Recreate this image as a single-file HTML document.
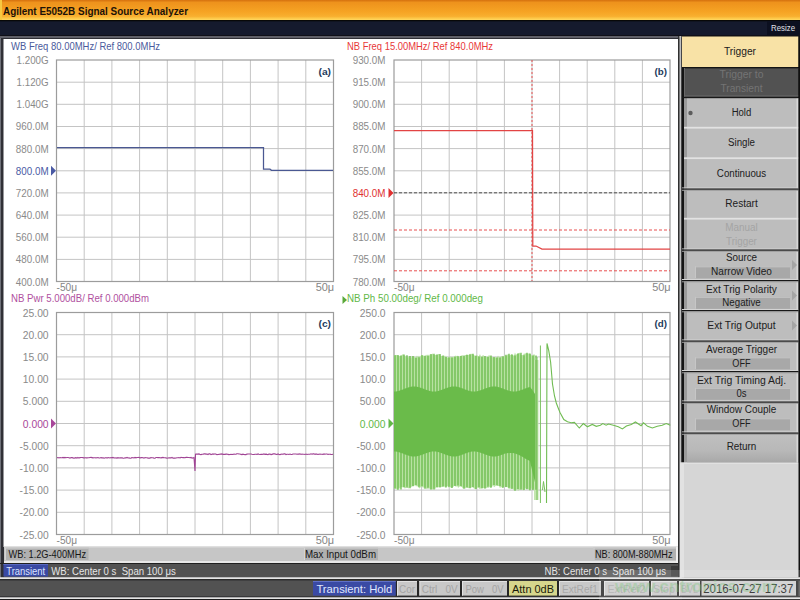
<!DOCTYPE html>
<html><head><meta charset="utf-8"><style>
html,body{margin:0;padding:0;width:800px;height:600px;overflow:hidden;background:#000}
svg{display:block}
text{font-family:"Liberation Sans", sans-serif;}
</style></head><body>
<svg width="800" height="600" viewBox="0 0 800 600" shape-rendering="auto">
<defs>
<linearGradient id="tb" x1="0" y1="0" x2="0" y2="1">
<stop offset="0" stop-color="#d4700e"/><stop offset="0.12" stop-color="#ee921c"/>
<stop offset="0.6" stop-color="#f6a424"/><stop offset="0.82" stop-color="#f8b030"/><stop offset="0.9" stop-color="#fcc444"/><stop offset="1" stop-color="#ffd860"/>
</linearGradient>
<linearGradient id="sk" x1="0" y1="0" x2="0" y2="1">
<stop offset="0" stop-color="#c0c0c0"/><stop offset="0.6" stop-color="#b8b8b8"/><stop offset="1" stop-color="#a8a8a8"/>
</linearGradient>
</defs>
<rect x="0" y="0" width="800" height="20" fill="url(#tb)"/>
<rect x="0" y="0" width="2" height="20" fill="#f8c840"/>
<text x="3" y="15" font-size="11.5" fill="#1c1208" text-anchor="start" font-weight="bold" textLength="185" lengthAdjust="spacingAndGlyphs">Agilent E5052B Signal Source Analyzer</text>
<rect x="0" y="20" width="800" height="18" fill="#151a2d"/>
<rect x="0" y="20" width="800" height="1.3" fill="#080808"/>
<rect x="0" y="35" width="800" height="1" fill="#101018"/>
<rect x="767" y="21" width="33" height="14" fill="#0c1020"/>
<text x="771" y="31" font-size="9.5" fill="#e0e0e8" text-anchor="start" font-weight="normal" textLength="24" lengthAdjust="spacingAndGlyphs">Resize</text>
<rect x="0" y="36" width="682" height="564" fill="#303036"/>
<rect x="0" y="36" width="682" height="2" fill="#606068"/>
<rect x="0" y="38" width="1" height="540" fill="#70727a"/>
<rect x="3.5" y="39" width="675.5" height="508" fill="#ffffff"/>
<line x1="84.2" y1="60" x2="84.2" y2="281.5" stroke="#c4c4c4" stroke-width="1"/>
<line x1="56.5" y1="82.2" x2="333.5" y2="82.2" stroke="#c4c4c4" stroke-width="1"/>
<line x1="111.9" y1="60" x2="111.9" y2="281.5" stroke="#c4c4c4" stroke-width="1"/>
<line x1="56.5" y1="104.3" x2="333.5" y2="104.3" stroke="#c4c4c4" stroke-width="1"/>
<line x1="139.6" y1="60" x2="139.6" y2="281.5" stroke="#c4c4c4" stroke-width="1"/>
<line x1="56.5" y1="126.5" x2="333.5" y2="126.5" stroke="#c4c4c4" stroke-width="1"/>
<line x1="167.3" y1="60" x2="167.3" y2="281.5" stroke="#c4c4c4" stroke-width="1"/>
<line x1="56.5" y1="148.6" x2="333.5" y2="148.6" stroke="#c4c4c4" stroke-width="1"/>
<line x1="195.0" y1="60" x2="195.0" y2="281.5" stroke="#c4c4c4" stroke-width="1"/>
<line x1="56.5" y1="170.8" x2="333.5" y2="170.8" stroke="#c4c4c4" stroke-width="1"/>
<line x1="222.7" y1="60" x2="222.7" y2="281.5" stroke="#c4c4c4" stroke-width="1"/>
<line x1="56.5" y1="192.9" x2="333.5" y2="192.9" stroke="#c4c4c4" stroke-width="1"/>
<line x1="250.4" y1="60" x2="250.4" y2="281.5" stroke="#c4c4c4" stroke-width="1"/>
<line x1="56.5" y1="215.1" x2="333.5" y2="215.1" stroke="#c4c4c4" stroke-width="1"/>
<line x1="278.1" y1="60" x2="278.1" y2="281.5" stroke="#c4c4c4" stroke-width="1"/>
<line x1="56.5" y1="237.2" x2="333.5" y2="237.2" stroke="#c4c4c4" stroke-width="1"/>
<line x1="305.8" y1="60" x2="305.8" y2="281.5" stroke="#c4c4c4" stroke-width="1"/>
<line x1="56.5" y1="259.4" x2="333.5" y2="259.4" stroke="#c4c4c4" stroke-width="1"/>
<rect x="56.5" y="60" width="277.0" height="221.5" fill="none" stroke="#9c9c9c" stroke-width="1.2"/>
<text x="48.6" y="64.0" font-size="11" fill="#8a8a8a" text-anchor="end" font-weight="normal" textLength="32.0" lengthAdjust="spacingAndGlyphs">1.200G</text>
<text x="48.6" y="86.15" font-size="11" fill="#8a8a8a" text-anchor="end" font-weight="normal" textLength="32.0" lengthAdjust="spacingAndGlyphs">1.120G</text>
<text x="48.6" y="108.3" font-size="11" fill="#8a8a8a" text-anchor="end" font-weight="normal" textLength="32.0" lengthAdjust="spacingAndGlyphs">1.040G</text>
<text x="48.6" y="130.45" font-size="11" fill="#8a8a8a" text-anchor="end" font-weight="normal" textLength="32.8" lengthAdjust="spacingAndGlyphs">960.0M</text>
<text x="48.6" y="152.6" font-size="11" fill="#8a8a8a" text-anchor="end" font-weight="normal" textLength="32.8" lengthAdjust="spacingAndGlyphs">880.0M</text>
<text x="48.6" y="174.75" font-size="11" fill="#4a5aa4" text-anchor="end" font-weight="normal" textLength="32.8" lengthAdjust="spacingAndGlyphs">800.0M</text>
<text x="48.6" y="196.9" font-size="11" fill="#8a8a8a" text-anchor="end" font-weight="normal" textLength="32.8" lengthAdjust="spacingAndGlyphs">720.0M</text>
<text x="48.6" y="219.05" font-size="11" fill="#8a8a8a" text-anchor="end" font-weight="normal" textLength="32.8" lengthAdjust="spacingAndGlyphs">640.0M</text>
<text x="48.6" y="241.2" font-size="11" fill="#8a8a8a" text-anchor="end" font-weight="normal" textLength="32.8" lengthAdjust="spacingAndGlyphs">560.0M</text>
<text x="48.6" y="263.35" font-size="11" fill="#8a8a8a" text-anchor="end" font-weight="normal" textLength="32.8" lengthAdjust="spacingAndGlyphs">480.0M</text>
<text x="48.6" y="285.5" font-size="11" fill="#8a8a8a" text-anchor="end" font-weight="normal" textLength="32.8" lengthAdjust="spacingAndGlyphs">400.0M</text>
<path d="M51.0,165.75 L56.0,170.75 L51.0,175.75 Z" fill="#4a5aa4"/>
<text x="56.5" y="290.5" font-size="10.5" fill="#858585" text-anchor="start" font-weight="normal" textLength="20.5" lengthAdjust="spacingAndGlyphs">-50μ</text>
<text x="334.2" y="290.5" font-size="10.5" fill="#858585" text-anchor="end" font-weight="normal" textLength="18.5" lengthAdjust="spacingAndGlyphs">50μ</text>
<line x1="421.6" y1="60" x2="421.6" y2="281.5" stroke="#c4c4c4" stroke-width="1"/>
<line x1="394" y1="82.2" x2="670" y2="82.2" stroke="#c4c4c4" stroke-width="1"/>
<line x1="449.2" y1="60" x2="449.2" y2="281.5" stroke="#c4c4c4" stroke-width="1"/>
<line x1="394" y1="104.3" x2="670" y2="104.3" stroke="#c4c4c4" stroke-width="1"/>
<line x1="476.8" y1="60" x2="476.8" y2="281.5" stroke="#c4c4c4" stroke-width="1"/>
<line x1="394" y1="126.5" x2="670" y2="126.5" stroke="#c4c4c4" stroke-width="1"/>
<line x1="504.4" y1="60" x2="504.4" y2="281.5" stroke="#c4c4c4" stroke-width="1"/>
<line x1="394" y1="148.6" x2="670" y2="148.6" stroke="#c4c4c4" stroke-width="1"/>
<line x1="532.0" y1="60" x2="532.0" y2="281.5" stroke="#c4c4c4" stroke-width="1"/>
<line x1="394" y1="170.8" x2="670" y2="170.8" stroke="#c4c4c4" stroke-width="1"/>
<line x1="559.6" y1="60" x2="559.6" y2="281.5" stroke="#c4c4c4" stroke-width="1"/>
<line x1="394" y1="192.9" x2="670" y2="192.9" stroke="#c4c4c4" stroke-width="1"/>
<line x1="587.2" y1="60" x2="587.2" y2="281.5" stroke="#c4c4c4" stroke-width="1"/>
<line x1="394" y1="215.1" x2="670" y2="215.1" stroke="#c4c4c4" stroke-width="1"/>
<line x1="614.8" y1="60" x2="614.8" y2="281.5" stroke="#c4c4c4" stroke-width="1"/>
<line x1="394" y1="237.2" x2="670" y2="237.2" stroke="#c4c4c4" stroke-width="1"/>
<line x1="642.4" y1="60" x2="642.4" y2="281.5" stroke="#c4c4c4" stroke-width="1"/>
<line x1="394" y1="259.4" x2="670" y2="259.4" stroke="#c4c4c4" stroke-width="1"/>
<rect x="394" y="60" width="276" height="221.5" fill="none" stroke="#9c9c9c" stroke-width="1.2"/>
<text x="385.5" y="64.0" font-size="11" fill="#8a8a8a" text-anchor="end" font-weight="normal" textLength="32.8" lengthAdjust="spacingAndGlyphs">930.0M</text>
<text x="385.5" y="86.15" font-size="11" fill="#8a8a8a" text-anchor="end" font-weight="normal" textLength="32.8" lengthAdjust="spacingAndGlyphs">915.0M</text>
<text x="385.5" y="108.3" font-size="11" fill="#8a8a8a" text-anchor="end" font-weight="normal" textLength="32.8" lengthAdjust="spacingAndGlyphs">900.0M</text>
<text x="385.5" y="130.45" font-size="11" fill="#8a8a8a" text-anchor="end" font-weight="normal" textLength="32.8" lengthAdjust="spacingAndGlyphs">885.0M</text>
<text x="385.5" y="152.6" font-size="11" fill="#8a8a8a" text-anchor="end" font-weight="normal" textLength="32.8" lengthAdjust="spacingAndGlyphs">870.0M</text>
<text x="385.5" y="174.75" font-size="11" fill="#8a8a8a" text-anchor="end" font-weight="normal" textLength="32.8" lengthAdjust="spacingAndGlyphs">855.0M</text>
<text x="385.5" y="196.9" font-size="11" fill="#e03030" text-anchor="end" font-weight="normal" textLength="32.8" lengthAdjust="spacingAndGlyphs">840.0M</text>
<text x="385.5" y="219.05" font-size="11" fill="#8a8a8a" text-anchor="end" font-weight="normal" textLength="32.8" lengthAdjust="spacingAndGlyphs">825.0M</text>
<text x="385.5" y="241.2" font-size="11" fill="#8a8a8a" text-anchor="end" font-weight="normal" textLength="32.8" lengthAdjust="spacingAndGlyphs">810.0M</text>
<text x="385.5" y="263.35" font-size="11" fill="#8a8a8a" text-anchor="end" font-weight="normal" textLength="32.8" lengthAdjust="spacingAndGlyphs">795.0M</text>
<text x="385.5" y="285.5" font-size="11" fill="#8a8a8a" text-anchor="end" font-weight="normal" textLength="32.8" lengthAdjust="spacingAndGlyphs">780.0M</text>
<path d="M388.5,187.9 L393.5,192.9 L388.5,197.9 Z" fill="#e03030"/>
<text x="394" y="290.5" font-size="10.5" fill="#858585" text-anchor="start" font-weight="normal" textLength="20.5" lengthAdjust="spacingAndGlyphs">-50μ</text>
<text x="670.7" y="290.5" font-size="10.5" fill="#858585" text-anchor="end" font-weight="normal" textLength="18.5" lengthAdjust="spacingAndGlyphs">50μ</text>
<line x1="84.2" y1="312.5" x2="84.2" y2="534.5" stroke="#c4c4c4" stroke-width="1"/>
<line x1="56.5" y1="334.7" x2="333.5" y2="334.7" stroke="#c4c4c4" stroke-width="1"/>
<line x1="111.9" y1="312.5" x2="111.9" y2="534.5" stroke="#c4c4c4" stroke-width="1"/>
<line x1="56.5" y1="356.9" x2="333.5" y2="356.9" stroke="#c4c4c4" stroke-width="1"/>
<line x1="139.6" y1="312.5" x2="139.6" y2="534.5" stroke="#c4c4c4" stroke-width="1"/>
<line x1="56.5" y1="379.1" x2="333.5" y2="379.1" stroke="#c4c4c4" stroke-width="1"/>
<line x1="167.3" y1="312.5" x2="167.3" y2="534.5" stroke="#c4c4c4" stroke-width="1"/>
<line x1="56.5" y1="401.3" x2="333.5" y2="401.3" stroke="#c4c4c4" stroke-width="1"/>
<line x1="195.0" y1="312.5" x2="195.0" y2="534.5" stroke="#c4c4c4" stroke-width="1"/>
<line x1="56.5" y1="423.5" x2="333.5" y2="423.5" stroke="#c4c4c4" stroke-width="1"/>
<line x1="222.7" y1="312.5" x2="222.7" y2="534.5" stroke="#c4c4c4" stroke-width="1"/>
<line x1="56.5" y1="445.7" x2="333.5" y2="445.7" stroke="#c4c4c4" stroke-width="1"/>
<line x1="250.4" y1="312.5" x2="250.4" y2="534.5" stroke="#c4c4c4" stroke-width="1"/>
<line x1="56.5" y1="467.9" x2="333.5" y2="467.9" stroke="#c4c4c4" stroke-width="1"/>
<line x1="278.1" y1="312.5" x2="278.1" y2="534.5" stroke="#c4c4c4" stroke-width="1"/>
<line x1="56.5" y1="490.1" x2="333.5" y2="490.1" stroke="#c4c4c4" stroke-width="1"/>
<line x1="305.8" y1="312.5" x2="305.8" y2="534.5" stroke="#c4c4c4" stroke-width="1"/>
<line x1="56.5" y1="512.3" x2="333.5" y2="512.3" stroke="#c4c4c4" stroke-width="1"/>
<rect x="56.5" y="312.5" width="277.0" height="222.0" fill="none" stroke="#9c9c9c" stroke-width="1.2"/>
<text x="48.6" y="316.5" font-size="11" fill="#8a8a8a" text-anchor="end" font-weight="normal" textLength="25.8" lengthAdjust="spacingAndGlyphs">25.00</text>
<text x="48.6" y="338.7" font-size="11" fill="#8a8a8a" text-anchor="end" font-weight="normal" textLength="25.8" lengthAdjust="spacingAndGlyphs">20.00</text>
<text x="48.6" y="360.9" font-size="11" fill="#8a8a8a" text-anchor="end" font-weight="normal" textLength="25.8" lengthAdjust="spacingAndGlyphs">15.00</text>
<text x="48.6" y="383.1" font-size="11" fill="#8a8a8a" text-anchor="end" font-weight="normal" textLength="25.8" lengthAdjust="spacingAndGlyphs">10.00</text>
<text x="48.6" y="405.3" font-size="11" fill="#8a8a8a" text-anchor="end" font-weight="normal" textLength="25.8" lengthAdjust="spacingAndGlyphs">5.000</text>
<text x="48.6" y="427.5" font-size="11" fill="#a8479a" text-anchor="end" font-weight="normal" textLength="25.8" lengthAdjust="spacingAndGlyphs">0.000</text>
<text x="48.6" y="449.7" font-size="11" fill="#8a8a8a" text-anchor="end" font-weight="normal" textLength="29.0" lengthAdjust="spacingAndGlyphs">-5.000</text>
<text x="48.6" y="471.9" font-size="11" fill="#8a8a8a" text-anchor="end" font-weight="normal" textLength="29.0" lengthAdjust="spacingAndGlyphs">-10.00</text>
<text x="48.6" y="494.1" font-size="11" fill="#8a8a8a" text-anchor="end" font-weight="normal" textLength="29.0" lengthAdjust="spacingAndGlyphs">-15.00</text>
<text x="48.6" y="516.3" font-size="11" fill="#8a8a8a" text-anchor="end" font-weight="normal" textLength="29.0" lengthAdjust="spacingAndGlyphs">-20.00</text>
<text x="48.6" y="538.5" font-size="11" fill="#8a8a8a" text-anchor="end" font-weight="normal" textLength="29.0" lengthAdjust="spacingAndGlyphs">-25.00</text>
<path d="M51.0,418.5 L56.0,423.5 L51.0,428.5 Z" fill="#a8479a"/>
<text x="56.5" y="543.5" font-size="10.5" fill="#858585" text-anchor="start" font-weight="normal" textLength="20.5" lengthAdjust="spacingAndGlyphs">-50μ</text>
<text x="334.2" y="543.5" font-size="10.5" fill="#858585" text-anchor="end" font-weight="normal" textLength="18.5" lengthAdjust="spacingAndGlyphs">50μ</text>
<line x1="421.6" y1="312.5" x2="421.6" y2="534.5" stroke="#c4c4c4" stroke-width="1"/>
<line x1="394" y1="334.7" x2="670" y2="334.7" stroke="#c4c4c4" stroke-width="1"/>
<line x1="449.2" y1="312.5" x2="449.2" y2="534.5" stroke="#c4c4c4" stroke-width="1"/>
<line x1="394" y1="356.9" x2="670" y2="356.9" stroke="#c4c4c4" stroke-width="1"/>
<line x1="476.8" y1="312.5" x2="476.8" y2="534.5" stroke="#c4c4c4" stroke-width="1"/>
<line x1="394" y1="379.1" x2="670" y2="379.1" stroke="#c4c4c4" stroke-width="1"/>
<line x1="504.4" y1="312.5" x2="504.4" y2="534.5" stroke="#c4c4c4" stroke-width="1"/>
<line x1="394" y1="401.3" x2="670" y2="401.3" stroke="#c4c4c4" stroke-width="1"/>
<line x1="532.0" y1="312.5" x2="532.0" y2="534.5" stroke="#c4c4c4" stroke-width="1"/>
<line x1="394" y1="423.5" x2="670" y2="423.5" stroke="#c4c4c4" stroke-width="1"/>
<line x1="559.6" y1="312.5" x2="559.6" y2="534.5" stroke="#c4c4c4" stroke-width="1"/>
<line x1="394" y1="445.7" x2="670" y2="445.7" stroke="#c4c4c4" stroke-width="1"/>
<line x1="587.2" y1="312.5" x2="587.2" y2="534.5" stroke="#c4c4c4" stroke-width="1"/>
<line x1="394" y1="467.9" x2="670" y2="467.9" stroke="#c4c4c4" stroke-width="1"/>
<line x1="614.8" y1="312.5" x2="614.8" y2="534.5" stroke="#c4c4c4" stroke-width="1"/>
<line x1="394" y1="490.1" x2="670" y2="490.1" stroke="#c4c4c4" stroke-width="1"/>
<line x1="642.4" y1="312.5" x2="642.4" y2="534.5" stroke="#c4c4c4" stroke-width="1"/>
<line x1="394" y1="512.3" x2="670" y2="512.3" stroke="#c4c4c4" stroke-width="1"/>
<rect x="394" y="312.5" width="276" height="222.0" fill="none" stroke="#9c9c9c" stroke-width="1.2"/>
<text x="385.5" y="316.5" font-size="11" fill="#8a8a8a" text-anchor="end" font-weight="normal" textLength="25.8" lengthAdjust="spacingAndGlyphs">250.0</text>
<text x="385.5" y="338.7" font-size="11" fill="#8a8a8a" text-anchor="end" font-weight="normal" textLength="25.8" lengthAdjust="spacingAndGlyphs">200.0</text>
<text x="385.5" y="360.9" font-size="11" fill="#8a8a8a" text-anchor="end" font-weight="normal" textLength="25.8" lengthAdjust="spacingAndGlyphs">150.0</text>
<text x="385.5" y="383.1" font-size="11" fill="#8a8a8a" text-anchor="end" font-weight="normal" textLength="25.8" lengthAdjust="spacingAndGlyphs">100.0</text>
<text x="385.5" y="405.3" font-size="11" fill="#8a8a8a" text-anchor="end" font-weight="normal" textLength="25.8" lengthAdjust="spacingAndGlyphs">50.00</text>
<text x="385.5" y="427.5" font-size="11" fill="#62b848" text-anchor="end" font-weight="normal" textLength="25.8" lengthAdjust="spacingAndGlyphs">0.000</text>
<text x="385.5" y="449.7" font-size="11" fill="#8a8a8a" text-anchor="end" font-weight="normal" textLength="29.0" lengthAdjust="spacingAndGlyphs">-50.00</text>
<text x="385.5" y="471.9" font-size="11" fill="#8a8a8a" text-anchor="end" font-weight="normal" textLength="29.0" lengthAdjust="spacingAndGlyphs">-100.0</text>
<text x="385.5" y="494.1" font-size="11" fill="#8a8a8a" text-anchor="end" font-weight="normal" textLength="29.0" lengthAdjust="spacingAndGlyphs">-150.0</text>
<text x="385.5" y="516.3" font-size="11" fill="#8a8a8a" text-anchor="end" font-weight="normal" textLength="29.0" lengthAdjust="spacingAndGlyphs">-200.0</text>
<text x="385.5" y="538.5" font-size="11" fill="#8a8a8a" text-anchor="end" font-weight="normal" textLength="29.0" lengthAdjust="spacingAndGlyphs">-250.0</text>
<path d="M388.5,418.5 L393.5,423.5 L388.5,428.5 Z" fill="#62b848"/>
<text x="394" y="543.5" font-size="10.5" fill="#858585" text-anchor="start" font-weight="normal" textLength="20.5" lengthAdjust="spacingAndGlyphs">-50μ</text>
<text x="670.7" y="543.5" font-size="10.5" fill="#858585" text-anchor="end" font-weight="normal" textLength="18.5" lengthAdjust="spacingAndGlyphs">50μ</text>
<text x="11" y="50" font-size="11" fill="#4a5a9c" text-anchor="start" font-weight="normal" textLength="149" lengthAdjust="spacingAndGlyphs">WB Freq 80.00MHz/ Ref 800.0MHz</text>
<text x="347" y="50" font-size="11" fill="#e83838" text-anchor="start" font-weight="normal" textLength="146" lengthAdjust="spacingAndGlyphs">NB Freq 15.00MHz/ Ref 840.0MHz</text>
<text x="11" y="302" font-size="11" fill="#b050a0" text-anchor="start" font-weight="normal" textLength="138" lengthAdjust="spacingAndGlyphs">NB Pwr 5.000dB/ Ref 0.000dBm</text>
<path d="M342.5,296 L347,300 L342.5,304 Z" fill="#5aa83a"/>
<text x="347" y="302" font-size="11" fill="#62b848" text-anchor="start" font-weight="normal" textLength="136" lengthAdjust="spacingAndGlyphs">NB Ph 50.00deg/ Ref 0.000deg</text>
<text x="331" y="74.5" font-size="9.5" fill="#1c3a5c" text-anchor="end" font-weight="bold" textLength="12.5" lengthAdjust="spacingAndGlyphs">(a)</text>
<text x="667" y="74.5" font-size="9.5" fill="#1c3a5c" text-anchor="end" font-weight="bold" textLength="12.5" lengthAdjust="spacingAndGlyphs">(b)</text>
<text x="331" y="326.5" font-size="9.5" fill="#1c3a5c" text-anchor="end" font-weight="bold" textLength="12.5" lengthAdjust="spacingAndGlyphs">(c)</text>
<text x="667" y="326.5" font-size="9.5" fill="#1c3a5c" text-anchor="end" font-weight="bold" textLength="12.5" lengthAdjust="spacingAndGlyphs">(d)</text>
<polyline points="57,147.5 263.5,147.5 263.5,169.2 270,169.2 271.5,170.3 333,170.3" fill="none" stroke="#4a5892" stroke-width="1.25"/>
<line x1="532" y1="60" x2="532" y2="281" stroke="#e85050" stroke-width="1" stroke-dasharray="2,2"/>
<line x1="394" y1="192.8" x2="670" y2="192.8" stroke="#505050" stroke-width="1" stroke-dasharray="3,2"/>
<line x1="394" y1="230" x2="670" y2="230" stroke="#e85050" stroke-width="1" stroke-dasharray="3,2"/>
<line x1="394" y1="270.8" x2="670" y2="270.8" stroke="#e85050" stroke-width="1" stroke-dasharray="3,2"/>
<polyline points="394,130.7 532.5,130.7 532.8,246 536,246 542,249 670,249" fill="none" stroke="#e24444" stroke-width="1.25"/>
<polyline points="57,457.7 58,457.5 59,457.9 60,457.5 61,457.8 62,457.7 63,457.4 64,457.8 65,457.4 66,457.7 67,457.5 68,457.5 69,457.7 70,458.1 71,457.5 72,457.6 73,457.9 74,458.2 75,457.9 76,457.7 77,458.2 78,457.4 79,458.1 80,457.6 81,457.5 82,457.5 83,457.6 84,458.1 85,457.5 86,457.9 87,457.9 88,457.7 89,457.8 90,457.5 91,457.4 92,457.6 93,457.9 94,457.7 95,457.7 96,457.9 97,457.8 98,457.6 99,458.0 100,458.0 101,457.6 102,457.9 103,457.8 104,458.1 105,458.0 106,457.6 107,458.2 108,457.5 109,457.7 110,458.0 111,457.5 112,457.8 113,457.4 114,457.9 115,458.0 116,457.9 117,458.1 118,457.7 119,458.0 120,457.9 121,457.9 122,457.8 123,458.1 124,458.2 125,457.8 126,457.9 127,457.4 128,458.0 129,457.9 130,458.2 131,458.1 132,457.6 133,457.7 134,457.9 135,457.4 136,457.8 137,457.5 138,457.5 139,457.4 140,458.0 141,457.5 142,457.6 143,457.7 144,458.1 145,457.5 146,457.8 147,457.8 148,458.1 149,458.1 150,458.1 151,457.6 152,457.7 153,457.7 154,458.1 155,458.2 156,457.5 157,457.5 158,457.6 159,457.6 160,457.8 161,457.9 162,457.6 163,457.4 164,457.7 165,457.7 166,457.9 167,458.2 168,458.0 169,457.8 170,457.9 171,457.9 172,457.4 173,458.1 174,458.0 175,458.1 176,458.0 177,457.7 178,457.7 179,457.5 180,457.9 181,457.4 182,457.5 183,457.6 184,457.5 185,457.7 186,457.4 187,457.4 188,457.5 189,457.5 190,457.7 191,457.4 192,458.1 193,457.9 194,457.5 195,471 195.5,454.2 196,454.0 197,454.1 198,454.1 199,453.9 200,454.5 201,454.6 202,454.2 203,454.2 204,453.9 205,453.9 206,454.1 207,454.0 208,454.5 209,453.9 210,453.8 211,454.6 212,454.2 213,453.9 214,454.2 215,453.8 216,454.2 217,454.6 218,454.5 219,454.4 220,454.0 221,454.1 222,453.9 223,454.4 224,454.2 225,454.4 226,454.1 227,454.0 228,454.4 229,454.6 230,454.5 231,454.4 232,454.5 233,454.4 234,454.0 235,454.2 236,454.1 237,453.8 238,453.8 239,454.0 240,454.0 241,454.4 242,454.6 243,454.2 244,454.5 245,454.6 246,454.6 247,454.1 248,454.0 249,454.0 250,454.0 251,454.0 252,454.3 253,454.5 254,454.5 255,454.2 256,454.3 257,454.4 258,453.9 259,454.3 260,454.5 261,454.4 262,454.4 263,454.2 264,453.9 265,454.4 266,454.1 267,454.4 268,454.6 269,454.1 270,454.1 271,454.6 272,454.4 273,453.9 274,453.9 275,453.9 276,454.5 277,454.4 278,453.9 279,454.5 280,454.6 281,454.3 282,454.1 283,454.2 284,453.9 285,453.8 286,454.6 287,454.3 288,454.2 289,454.5 290,454.1 291,454.5 292,454.5 293,454.0 294,454.0 295,454.0 296,454.0 297,454.3 298,454.0 299,454.1 300,453.9 301,454.5 302,454.1 303,454.2 304,454.3 305,454.5 306,454.1 307,454.5 308,454.2 309,454.2 310,454.2 311,453.8 312,454.2 313,453.9 314,453.8 315,454.4 316,453.9 317,454.2 318,454.4 319,454.2 320,454.1 321,454.2 322,454.2 323,454.4 324,453.9 325,454.2 326,454.0 327,454.0 328,454.4 329,454.2 330,454.2 331,454.4 332,454.5 333,454.2" fill="none" stroke="#a04494" stroke-width="1.1"/>
<path d="M394,355.3 L395,355.0 L396,354.9 L397,355.0 L398,355.8 L399,356.6 L400,355.6 L401,356.6 L402,354.6 L403,354.6 L404,354.7 L405,357.0 L406,355.3 L407,356.9 L408,357.7 L409,355.9 L410,356.5 L411,358.4 L412,355.9 L413,357.0 L414,356.1 L415,357.7 L416,357.1 L417,355.4 L418,357.2 L419,355.4 L420,357.5 L421,355.3 L422,354.9 L423,355.5 L424,355.8 L425,356.8 L426,354.6 L427,355.8 L428,354.2 L429,355.9 L430,353.9 L431,355.5 L432,353.8 L433,353.7 L434,354.9 L435,355.2 L436,354.4 L437,355.2 L438,354.0 L439,353.9 L440,354.8 L441,356.3 L442,355.7 L443,355.4 L444,355.3 L445,356.9 L446,355.4 L447,357.8 L448,357.5 L449,356.7 L450,356.5 L451,357.5 L452,356.5 L453,357.6 L454,356.7 L455,355.7 L456,355.7 L457,356.2 L458,355.6 L459,357.8 L460,355.9 L461,355.8 L462,355.3 L463,355.4 L464,357.4 L465,355.1 L466,355.1 L467,354.0 L468,355.3 L469,354.4 L470,353.7 L471,353.9 L472,353.7 L473,354.4 L474,355.3 L475,355.8 L476,355.7 L477,354.8 L478,356.6 L479,356.0 L480,354.0 L481,356.7 L482,356.4 L483,354.8 L484,356.0 L485,357.1 L486,356.6 L487,357.0 L488,355.8 L489,355.6 L490,355.6 L491,357.1 L492,357.3 L493,357.0 L494,357.9 L495,357.0 L496,357.4 L497,357.6 L498,355.5 L499,357.4 L500,357.3 L501,356.4 L502,356.2 L503,357.0 L504,356.4 L505,354.8 L506,356.3 L507,355.5 L508,353.8 L509,355.4 L510,355.2 L511,354.6 L512,354.2 L513,355.4 L514,355.5 L515,352.6 L516,354.9 L517,353.8 L518,353.0 L519,353.0 L520,352.8 L521,355.3 L522,355.0 L523,355.2 L524,353.3 L525,354.1 L526,352.7 L527,354.1 L528,353.2 L529,353.8 L530,352.8 L531,355.3 L532,355.5 L533,355.4 L534,353.7 L535,355.5 L535,489.8 L534,489.1 L533,488.7 L532,489.9 L531,488.1 L530,489.9 L529,490.2 L528,488.7 L527,488.7 L526,489.3 L525,487.9 L524,490.6 L523,490.1 L522,489.5 L521,488.5 L520,489.7 L519,489.9 L518,490.9 L517,488.9 L516,491.0 L515,489.4 L514,490.7 L513,488.4 L512,488.0 L511,488.9 L510,488.2 L509,489.2 L508,487.7 L507,486.7 L506,487.3 L505,486.9 L504,486.2 L503,487.7 L502,487.7 L501,486.7 L500,488.3 L499,485.9 L498,486.0 L497,485.9 L496,485.2 L495,486.6 L494,487.2 L493,485.0 L492,487.1 L491,487.0 L490,487.7 L489,486.4 L488,485.5 L487,487.6 L486,488.4 L485,488.3 L484,488.5 L483,487.7 L482,488.7 L481,488.3 L480,489.1 L479,488.6 L478,487.3 L477,487.9 L476,489.6 L475,489.0 L474,488.6 L473,487.7 L472,487.0 L471,488.1 L470,487.6 L469,488.2 L468,488.1 L467,487.6 L466,487.4 L465,489.1 L464,487.6 L463,488.7 L462,487.0 L461,486.9 L460,486.1 L459,487.3 L458,487.7 L457,485.6 L456,487.3 L455,485.4 L454,486.0 L453,486.9 L452,487.5 L451,488.1 L450,486.7 L449,487.8 L448,486.7 L447,485.9 L446,487.1 L445,487.5 L444,486.0 L443,486.2 L442,486.8 L441,487.3 L440,487.5 L439,487.3 L438,487.3 L437,487.6 L436,487.3 L435,489.8 L434,488.0 L433,489.6 L432,489.5 L431,489.3 L430,489.6 L429,488.0 L428,486.8 L427,488.6 L426,489.1 L425,486.9 L424,488.7 L423,486.2 L422,488.0 L421,486.3 L420,488.3 L419,488.2 L418,486.7 L417,486.1 L416,486.4 L415,485.1 L414,486.0 L413,486.0 L412,486.3 L411,487.6 L410,486.7 L409,488.2 L408,488.3 L407,486.0 L406,487.8 L405,488.5 L404,488.0 L403,486.9 L402,487.6 L401,486.9 L400,489.4 L399,487.5 L398,489.4 L397,489.7 L396,488.6 L395,489.1 L394,488.5 Z" fill="#b8e2a2"/>
<rect x="534" y="360" width="4.5" height="140" fill="#c4e6b0"/>
<path d="M395,355.3 V488.5 M398,355.0 V489.7 M401,355.6 V489.4 M404,354.6 V486.9 M407,355.3 V487.8 M410,355.9 V488.2 M413,355.9 V486.3 M416,357.7 V485.1 M419,357.2 V486.7 M422,355.3 V486.3 M425,355.8 V488.7 M428,355.8 V488.6 M431,353.9 V489.6 M434,353.7 V489.6 M437,354.4 V487.3 M440,353.9 V487.3 M443,355.7 V486.8 M446,356.9 V487.5 M449,357.5 V486.7 M452,357.5 V488.1 M455,356.7 V486.0 M458,356.2 V485.6 M461,355.9 V486.1 M464,355.4 V488.7 M467,355.1 V487.4 M470,354.4 V488.2 M473,353.7 V487.0 M476,355.8 V489.0 M479,356.6 V487.3 M482,356.7 V488.3 M485,356.0 V488.5 M488,357.0 V487.6 M491,355.6 V487.7 M494,357.0 V485.0 M497,357.4 V485.2 M500,357.4 V485.9 M503,356.2 V487.7 M506,354.8 V486.9 M509,353.8 V487.7 M512,354.6 V488.9 M515,355.5 V490.7 M518,353.8 V488.9 M521,352.8 V489.7 M524,355.2 V490.1 M527,352.7 V489.3 M530,353.8 V490.2 M533,355.5 V489.9 M536,355.5 V489.8" stroke="#6abb4a" stroke-width="1.3" fill="none"/>
<path d="M394,391.5 L395,391.5 L396,391.4 L397,391.2 L398,391.0 L399,390.8 L400,390.5 L401,390.1 L402,389.8 L403,389.4 L404,389.0 L405,388.6 L406,388.2 L407,387.9 L408,387.5 L409,387.2 L410,387.0 L411,386.8 L412,386.6 L413,386.5 L414,386.5 L415,386.5 L416,386.6 L417,386.8 L418,387.0 L419,387.2 L420,387.5 L421,387.9 L422,388.2 L423,388.6 L424,389.0 L425,389.4 L426,389.8 L427,390.1 L428,390.5 L429,390.8 L430,391.0 L431,391.2 L432,391.4 L433,391.5 L434,391.5 L435,391.5 L436,391.4 L437,391.2 L438,391.0 L439,390.8 L440,390.5 L441,390.1 L442,389.8 L443,389.4 L444,389.0 L445,388.6 L446,388.2 L447,387.9 L448,387.5 L449,387.2 L450,387.0 L451,386.8 L452,386.6 L453,386.5 L454,386.5 L455,386.5 L456,386.6 L457,386.8 L458,387.0 L459,387.2 L460,387.5 L461,387.9 L462,388.2 L463,388.6 L464,389.0 L465,389.4 L466,389.8 L467,390.1 L468,390.5 L469,390.8 L470,391.0 L471,391.2 L472,391.4 L473,391.5 L474,391.5 L475,391.5 L476,391.4 L477,391.2 L478,391.0 L479,390.8 L480,390.5 L481,390.1 L482,389.8 L483,389.4 L484,389.0 L485,388.6 L486,388.2 L487,387.9 L488,387.5 L489,387.2 L490,387.0 L491,386.8 L492,386.6 L493,386.5 L494,386.5 L495,386.5 L496,386.6 L497,386.8 L498,387.0 L499,387.2 L500,387.5 L501,387.9 L502,388.2 L503,388.6 L504,389.0 L505,389.4 L506,389.8 L507,390.1 L508,390.5 L509,390.8 L510,391.0 L511,391.2 L512,391.4 L513,391.5 L514,391.5 L515,391.5 L516,391.4 L517,391.2 L518,391.0 L519,390.8 L520,390.5 L521,390.1 L522,389.8 L523,389.4 L524,389.0 L525,388.6 L526,388.2 L527,387.9 L528,387.5 L529,387.2 L530,387.0 L531,388.3 L532,389.6 L533,391.0 L534,392.5 L535,394.0 L535,482.5 L534,478.3 L533,474.1 L532,469.8 L531,465.4 L530,461.0 L529,460.6 L528,460.1 L527,459.5 L526,459.0 L525,458.4 L524,457.8 L523,457.2 L522,456.6 L521,456.1 L520,455.5 L519,455.0 L518,454.6 L517,454.2 L516,453.8 L515,453.5 L514,453.3 L513,453.1 L512,453.0 L511,453.0 L510,453.0 L509,453.0 L508,453.1 L507,453.3 L506,453.4 L505,453.6 L504,454.0 L503,454.4 L502,454.8 L501,455.1 L500,455.5 L499,455.8 L498,456.0 L497,456.2 L496,456.4 L495,456.5 L494,456.5 L493,456.5 L492,456.4 L491,456.2 L490,456.0 L489,455.8 L488,455.5 L487,455.1 L486,454.8 L485,454.4 L484,454.0 L483,453.6 L482,453.2 L481,452.9 L480,452.5 L479,452.2 L478,452.0 L477,451.8 L476,451.6 L475,451.5 L474,451.5 L473,451.5 L472,451.6 L471,451.8 L470,452.0 L469,452.2 L468,452.5 L467,452.9 L466,453.2 L465,453.6 L464,454.0 L463,454.4 L462,454.8 L461,455.1 L460,455.5 L459,455.8 L458,456.0 L457,456.2 L456,456.4 L455,456.5 L454,456.5 L453,456.5 L452,456.4 L451,456.2 L450,456.0 L449,455.8 L448,455.5 L447,455.1 L446,454.8 L445,454.4 L444,454.0 L443,453.6 L442,453.2 L441,452.9 L440,452.5 L439,452.2 L438,452.0 L437,451.8 L436,451.6 L435,451.5 L434,451.5 L433,451.5 L432,451.6 L431,451.8 L430,452.0 L429,452.2 L428,452.5 L427,452.9 L426,453.2 L425,453.6 L424,454.0 L423,454.4 L422,454.8 L421,455.1 L420,455.5 L419,455.8 L418,456.0 L417,456.2 L416,456.4 L415,456.5 L414,456.5 L413,456.5 L412,456.4 L411,456.2 L410,456.0 L409,455.8 L408,455.5 L407,455.1 L406,454.8 L405,454.4 L404,454.0 L403,453.6 L402,453.2 L401,452.9 L400,452.5 L399,452.2 L398,452.0 L397,451.8 L396,451.6 L395,451.5 L394,451.5 Z" fill="#6abb4a"/>
<path d="M537,357 V500 M540.4,345.5 V503 M542.5,490 L543.5,481.5 L545,492" stroke="#78c05c" stroke-width="1" fill="none"/>
<polyline points="546.5,503 547,343.5 548.75,350.6 550.6,362 552.5,384 554.5,396 556.3,403 558,407.5 560,412.5 563.8,419.5 567.5,421.8 571.1,422.8 574.4,422.4 579.3,428 583.3,423.6 587.4,426.8 592.3,424.4 596.3,426.3 600.4,425.2 602.8,423.6 606.1,425.2 608.5,424 613.4,425.2 618.3,426.8 622.4,428.9 626.4,426 631.3,424.4 635.4,422 641.1,425.7 643.5,422.8 647.6,426.3 652.4,428 657.3,426.3 662.2,425.2 666.3,423.6 670.3,425.2" fill="none" stroke="#70bc52" stroke-width="1.1"/>
<rect x="4" y="546.5" width="674" height="14.5" fill="#c6c6c6"/>
<rect x="4" y="546.5" width="674" height="1" fill="#dcdcdc"/>
<rect x="4" y="561" width="674" height="2" fill="#e8e8e8"/>
<rect x="5" y="547.5" width="83.5" height="12.5" fill="#b0b0b0"/>
<rect x="5" y="547.5" width="83.5" height="1" fill="#d4d4d4"/>
<rect x="5" y="547.5" width="1" height="12.5" fill="#d4d4d4"/>
<text x="8.5" y="557.5" font-size="10.5" fill="#161616" text-anchor="start" font-weight="normal" textLength="77.5" lengthAdjust="spacingAndGlyphs">WB: 1.2G-400MHz</text>
<rect x="304" y="547.5" width="74" height="12.5" fill="#b0b0b0"/>
<rect x="304" y="547.5" width="74" height="1" fill="#d4d4d4"/>
<rect x="304" y="547.5" width="1" height="12.5" fill="#d4d4d4"/>
<text x="305" y="557.5" font-size="10.5" fill="#161616" text-anchor="start" font-weight="normal" textLength="71" lengthAdjust="spacingAndGlyphs">Max Input 0dBm</text>
<rect x="593.5" y="547.5" width="82.5" height="12.5" fill="#b0b0b0"/>
<rect x="593.5" y="547.5" width="82.5" height="1" fill="#d4d4d4"/>
<rect x="593.5" y="547.5" width="1" height="12.5" fill="#d4d4d4"/>
<text x="595.0" y="557.5" font-size="10.5" fill="#161616" text-anchor="start" font-weight="normal" textLength="77.5" lengthAdjust="spacingAndGlyphs">NB: 800M-880MHz</text>
<rect x="676" y="546.5" width="2" height="16.5" fill="#f0f0f0"/>
<rect x="0" y="563" width="678" height="1" fill="#202020"/>
<rect x="4" y="564" width="674" height="13.5" fill="#525252"/>
<rect x="3.5" y="564" width="44.5" height="12.5" fill="#3a4aa4"/>
<rect x="3.5" y="564" width="44.5" height="1" fill="#5868c0"/>
<text x="6.25" y="574.5" font-size="10.5" fill="#dce4ff" text-anchor="start" font-weight="normal" textLength="39" lengthAdjust="spacingAndGlyphs">Transient</text>
<text x="51.25" y="574.75" font-size="10.5" fill="#e6e6e6" text-anchor="start" font-weight="normal" textLength="124.5" lengthAdjust="spacingAndGlyphs">WB: Center 0 s  Span 100 μs</text>
<text x="544.5" y="574.75" font-size="10.5" fill="#e6e6e6" text-anchor="start" font-weight="normal" textLength="121.5" lengthAdjust="spacingAndGlyphs">NB: Center 0 s  Span 100 μs</text>
<rect x="671" y="566" width="7" height="10.5" fill="#3a3a3a"/>
<rect x="678" y="36" width="1.5" height="542" fill="#303030"/>
<rect x="679.5" y="36" width="2" height="542" fill="#c0c0c0"/>
<rect x="681.5" y="36" width="117" height="427" fill="#141414"/>
<rect x="682" y="36.5" width="116.5" height="30.5" fill="#f8e2a6"/>
<text x="740" y="55" font-size="10" fill="#202020" text-anchor="middle" font-weight="normal" textLength="32" lengthAdjust="spacingAndGlyphs">Trigger</text>
<rect x="684" y="68" width="114.5" height="28.5" fill="#525252"/>
<rect x="684" y="68" width="114.5" height="1" fill="#3a3a3a"/>
<rect x="684" y="68" width="1" height="28.5" fill="#6a6a6a"/>
<rect x="684" y="95.5" width="114.5" height="1" fill="#6a6a6a"/>
<text x="741.5" y="78" font-size="10" fill="#747474" text-anchor="middle" font-weight="normal" textLength="44" lengthAdjust="spacingAndGlyphs">Trigger to</text>
<text x="741.5" y="92" font-size="10" fill="#747474" text-anchor="middle" font-weight="normal" textLength="42" lengthAdjust="spacingAndGlyphs">Transient</text>
<rect x="684" y="98" width="114.5" height="30" fill="#bdbdbd"/>
<rect x="684" y="98" width="3" height="30" fill="#9a9a9a"/>
<rect x="796.5" y="98" width="2" height="30" fill="#d8d8d8"/>
<text x="741.5" y="115.5" font-size="10" fill="#202020" text-anchor="middle" font-weight="normal" textLength="19.6" lengthAdjust="spacingAndGlyphs">Hold</text>
<rect x="684" y="128" width="114.5" height="30.5" fill="#bdbdbd"/>
<rect x="684" y="128" width="3" height="30.5" fill="#9a9a9a"/>
<rect x="796.5" y="128" width="2" height="30.5" fill="#d8d8d8"/>
<text x="741.5" y="145.8" font-size="10" fill="#202020" text-anchor="middle" font-weight="normal" textLength="27" lengthAdjust="spacingAndGlyphs">Single</text>
<rect x="684" y="158.5" width="114.5" height="30.5" fill="#bdbdbd"/>
<rect x="684" y="158.5" width="3" height="30.5" fill="#9a9a9a"/>
<rect x="796.5" y="158.5" width="2" height="30.5" fill="#d8d8d8"/>
<text x="741.5" y="176.5" font-size="10" fill="#202020" text-anchor="middle" font-weight="normal" textLength="49.3" lengthAdjust="spacingAndGlyphs">Continuous</text>
<rect x="684" y="189" width="114.5" height="30" fill="#bdbdbd"/>
<rect x="684" y="189" width="3" height="30" fill="#9a9a9a"/>
<rect x="796.5" y="189" width="2" height="30" fill="#d8d8d8"/>
<text x="741.5" y="206.7" font-size="10" fill="#202020" text-anchor="middle" font-weight="normal" textLength="32.5" lengthAdjust="spacingAndGlyphs">Restart</text>
<rect x="684" y="219" width="114.5" height="31" fill="#bdbdbd"/>
<rect x="684" y="219" width="3" height="31" fill="#9a9a9a"/>
<rect x="796.5" y="219" width="2" height="31" fill="#d8d8d8"/>
<text x="741.5" y="231.2" font-size="10" fill="#a4a4a4" text-anchor="middle" font-weight="normal" textLength="32.5" lengthAdjust="spacingAndGlyphs">Manual</text>
<text x="741.5" y="245.0" font-size="10" fill="#a4a4a4" text-anchor="middle" font-weight="normal" textLength="30.8" lengthAdjust="spacingAndGlyphs">Trigger</text>
<rect x="684" y="250" width="114.5" height="30.5" fill="#bdbdbd"/>
<rect x="684" y="250" width="3" height="30.5" fill="#9a9a9a"/>
<rect x="796.5" y="250" width="2" height="30.5" fill="#d8d8d8"/>
<rect x="695" y="266.3" width="95" height="12" fill="#a8a8a8"/>
<rect x="695" y="266.3" width="95" height="1" fill="#c6c6c6"/>
<rect x="695" y="266.3" width="1" height="12" fill="#c6c6c6"/>
<text x="741.5" y="261.3" font-size="10" fill="#202020" text-anchor="middle" font-weight="normal" textLength="31.2" lengthAdjust="spacingAndGlyphs">Source</text>
<text x="741.5" y="275.1" font-size="10" fill="#202020" text-anchor="middle" font-weight="normal" textLength="60.8" lengthAdjust="spacingAndGlyphs">Narrow Video</text>
<path d="M792,260 L797,265 L792,270 Z" fill="#a4a4a4"/>
<rect x="684" y="280.5" width="114.5" height="30.0" fill="#bdbdbd"/>
<rect x="684" y="280.5" width="3" height="30.0" fill="#9a9a9a"/>
<rect x="796.5" y="280.5" width="2" height="30.0" fill="#d8d8d8"/>
<rect x="695" y="296.8" width="95" height="12" fill="#a8a8a8"/>
<rect x="695" y="296.8" width="95" height="1" fill="#c6c6c6"/>
<rect x="695" y="296.8" width="1" height="12" fill="#c6c6c6"/>
<text x="741.5" y="292.5" font-size="10" fill="#202020" text-anchor="middle" font-weight="normal" textLength="70.8" lengthAdjust="spacingAndGlyphs">Ext Trig Polarity</text>
<text x="741.5" y="306.3" font-size="10" fill="#202020" text-anchor="middle" font-weight="normal" textLength="38.3" lengthAdjust="spacingAndGlyphs">Negative</text>
<path d="M792,290.5 L797,295.5 L792,300.5 Z" fill="#a4a4a4"/>
<rect x="684" y="310.5" width="114.5" height="30.5" fill="#bdbdbd"/>
<rect x="684" y="310.5" width="3" height="30.5" fill="#9a9a9a"/>
<rect x="796.5" y="310.5" width="2" height="30.5" fill="#d8d8d8"/>
<text x="741.5" y="329.0" font-size="10" fill="#202020" text-anchor="middle" font-weight="normal" textLength="68.3" lengthAdjust="spacingAndGlyphs">Ext Trig Output</text>
<path d="M792,320.5 L797,325.5 L792,330.5 Z" fill="#a4a4a4"/>
<rect x="684" y="341" width="114.5" height="30.5" fill="#bdbdbd"/>
<rect x="684" y="341" width="3" height="30.5" fill="#9a9a9a"/>
<rect x="796.5" y="341" width="2" height="30.5" fill="#d8d8d8"/>
<rect x="695" y="357.3" width="95" height="12" fill="#a8a8a8"/>
<rect x="695" y="357.3" width="95" height="1" fill="#c6c6c6"/>
<rect x="695" y="357.3" width="1" height="12" fill="#c6c6c6"/>
<text x="741.5" y="353" font-size="10" fill="#202020" text-anchor="middle" font-weight="normal" textLength="71.2" lengthAdjust="spacingAndGlyphs">Average Trigger</text>
<text x="741.5" y="366.8" font-size="10" fill="#202020" text-anchor="middle" font-weight="normal" textLength="18.3" lengthAdjust="spacingAndGlyphs">OFF</text>
<rect x="684" y="371.5" width="114.5" height="30.5" fill="#bdbdbd"/>
<rect x="684" y="371.5" width="3" height="30.5" fill="#9a9a9a"/>
<rect x="796.5" y="371.5" width="2" height="30.5" fill="#d8d8d8"/>
<rect x="695" y="387.8" width="95" height="12" fill="#a8a8a8"/>
<rect x="695" y="387.8" width="95" height="1" fill="#c6c6c6"/>
<rect x="695" y="387.8" width="1" height="12" fill="#c6c6c6"/>
<text x="741.5" y="383.5" font-size="10" fill="#202020" text-anchor="middle" font-weight="normal" textLength="89.2" lengthAdjust="spacingAndGlyphs">Ext Trig Timing Adj.</text>
<text x="741.5" y="397.3" font-size="10" fill="#202020" text-anchor="middle" font-weight="normal" textLength="10" lengthAdjust="spacingAndGlyphs">0s</text>
<rect x="684" y="402" width="114.5" height="31" fill="#bdbdbd"/>
<rect x="684" y="402" width="3" height="31" fill="#9a9a9a"/>
<rect x="796.5" y="402" width="2" height="31" fill="#d8d8d8"/>
<rect x="695" y="418.3" width="95" height="12" fill="#a8a8a8"/>
<rect x="695" y="418.3" width="95" height="1" fill="#c6c6c6"/>
<rect x="695" y="418.3" width="1" height="12" fill="#c6c6c6"/>
<text x="741.5" y="413.3" font-size="10" fill="#202020" text-anchor="middle" font-weight="normal" textLength="69.7" lengthAdjust="spacingAndGlyphs">Window Couple</text>
<text x="741.5" y="427.1" font-size="10" fill="#202020" text-anchor="middle" font-weight="normal" textLength="18.3" lengthAdjust="spacingAndGlyphs">OFF</text>
<rect x="684" y="433" width="114.5" height="29.5" fill="url(#sk)"/>
<rect x="684" y="433" width="3" height="29.5" fill="#9a9a9a"/>
<rect x="796.5" y="433" width="2" height="29.5" fill="#d8d8d8"/>
<text x="741.5" y="450.3" font-size="10" fill="#202020" text-anchor="middle" font-weight="normal" textLength="29.7" lengthAdjust="spacingAndGlyphs">Return</text>
<rect x="684" y="126.8" width="114.5" height="1.8" fill="#e2e2e2"/>
<rect x="684" y="157.3" width="114.5" height="1.8" fill="#e2e2e2"/>
<rect x="682" y="187.5" width="116.5" height="1" fill="#d4d4d4"/>
<rect x="682" y="188.5" width="116.5" height="1.3" fill="#181818"/>
<rect x="682" y="189.8" width="116.5" height="1" fill="#9c9c9c"/>
<rect x="684" y="217.8" width="114.5" height="1.8" fill="#e2e2e2"/>
<rect x="682" y="248.5" width="116.5" height="1" fill="#d4d4d4"/>
<rect x="682" y="249.5" width="116.5" height="1.3" fill="#181818"/>
<rect x="682" y="250.8" width="116.5" height="1" fill="#9c9c9c"/>
<rect x="682" y="279.0" width="116.5" height="1" fill="#d4d4d4"/>
<rect x="682" y="280.0" width="116.5" height="1.3" fill="#181818"/>
<rect x="682" y="281.3" width="116.5" height="1" fill="#9c9c9c"/>
<rect x="682" y="309.0" width="116.5" height="1" fill="#d4d4d4"/>
<rect x="682" y="310.0" width="116.5" height="1.3" fill="#181818"/>
<rect x="682" y="311.3" width="116.5" height="1" fill="#9c9c9c"/>
<rect x="682" y="339.5" width="116.5" height="1" fill="#d4d4d4"/>
<rect x="682" y="340.5" width="116.5" height="1.3" fill="#181818"/>
<rect x="682" y="341.8" width="116.5" height="1" fill="#9c9c9c"/>
<rect x="682" y="370.0" width="116.5" height="1" fill="#d4d4d4"/>
<rect x="682" y="371.0" width="116.5" height="1.3" fill="#181818"/>
<rect x="682" y="372.3" width="116.5" height="1" fill="#9c9c9c"/>
<rect x="682" y="400.5" width="116.5" height="1" fill="#d4d4d4"/>
<rect x="682" y="401.5" width="116.5" height="1.3" fill="#181818"/>
<rect x="682" y="402.8" width="116.5" height="1" fill="#9c9c9c"/>
<rect x="682" y="431.5" width="116.5" height="1" fill="#d4d4d4"/>
<rect x="682" y="432.5" width="116.5" height="1.3" fill="#181818"/>
<rect x="682" y="433.8" width="116.5" height="1" fill="#9c9c9c"/>
<rect x="682" y="97" width="116.5" height="1.2" fill="#181818"/>
<circle cx="690.5" cy="113" r="2.2" fill="#5c5c5c"/>
<rect x="680" y="462.5" width="119" height="115" fill="#d6d6d6"/>
<rect x="680" y="462.5" width="4" height="115" fill="#e2e2e2"/>
<rect x="684" y="462.5" width="114.5" height="1.2" fill="#e6e6e6"/>
<rect x="798.5" y="36" width="1.5" height="542" fill="#101010"/>
<rect x="0" y="577.25" width="800" height="1.75" fill="#e6e6e6"/>
<rect x="0" y="579" width="800" height="1.5" fill="#2c2c2c"/>
<rect x="0" y="580.5" width="800" height="16" fill="#525252"/>
<rect x="0" y="596.5" width="800" height="0.8" fill="#303030"/>
<rect x="0" y="597.3" width="800" height="1.9" fill="#e4e4e4"/>
<rect x="0" y="599.2" width="800" height="0.8" fill="#101010"/>
<rect x="395.5" y="580.5" width="403" height="16" fill="#262626"/>
<rect x="313" y="581" width="82.75" height="14.6" fill="#3a4aa4"/>
<rect x="313" y="581" width="82.75" height="1" fill="#6070c8"/>
<text x="354.375" y="592.5" font-size="11" fill="#e0e8ff" text-anchor="middle" font-weight="normal" textLength="76" lengthAdjust="spacingAndGlyphs">Transient: Hold</text>
<rect x="397" y="581" width="20" height="14.6" fill="#c8c8c8"/>
<rect x="397" y="581" width="20" height="1" fill="#e2e2e2"/>
<rect x="397" y="581" width="1" height="14.6" fill="#e2e2e2"/>
<text x="407.0" y="592.5" font-size="11" fill="#a4a4a4" text-anchor="middle" font-weight="normal" textLength="16" lengthAdjust="spacingAndGlyphs">Cor</text>
<rect x="419.4" y="581" width="40.60000000000002" height="14.6" fill="#c8c8c8"/>
<rect x="419.4" y="581" width="40.60000000000002" height="1" fill="#e2e2e2"/>
<rect x="419.4" y="581" width="1" height="14.6" fill="#e2e2e2"/>
<text x="439.7" y="592.5" font-size="11" fill="#a4a4a4" text-anchor="middle" font-weight="normal" textLength="36" lengthAdjust="spacingAndGlyphs">Ctrl   0V</text>
<rect x="462" y="581" width="45" height="14.6" fill="#c8c8c8"/>
<rect x="462" y="581" width="45" height="1" fill="#e2e2e2"/>
<rect x="462" y="581" width="1" height="14.6" fill="#e2e2e2"/>
<text x="484.5" y="592.5" font-size="11" fill="#a4a4a4" text-anchor="middle" font-weight="normal" textLength="38" lengthAdjust="spacingAndGlyphs">Pow   0V</text>
<rect x="509" y="581" width="48" height="14.6" fill="#d6d68c"/>
<text x="533.0" y="592.5" font-size="11" fill="#1a1a08" text-anchor="middle" font-weight="normal" textLength="42" lengthAdjust="spacingAndGlyphs">Attn 0dB</text>
<rect x="559" y="581" width="42" height="14.6" fill="#c8c8c8"/>
<rect x="559" y="581" width="42" height="1" fill="#e2e2e2"/>
<rect x="559" y="581" width="1" height="14.6" fill="#e2e2e2"/>
<text x="580.0" y="592.5" font-size="11" fill="#a8a8a8" text-anchor="middle" font-weight="normal" textLength="36" lengthAdjust="spacingAndGlyphs">ExtRef1</text>
<rect x="604" y="581" width="45" height="14.6" fill="#c8c8c8"/>
<rect x="604" y="581" width="45" height="1" fill="#e2e2e2"/>
<rect x="604" y="581" width="1" height="14.6" fill="#e2e2e2"/>
<text x="626.5" y="592.5" font-size="11" fill="#a8a8a8" text-anchor="middle" font-weight="normal" textLength="38" lengthAdjust="spacingAndGlyphs">ExtRef2</text>
<rect x="651" y="581" width="26" height="14.6" fill="#c8c8c8"/>
<rect x="651" y="581" width="26" height="1" fill="#e2e2e2"/>
<rect x="651" y="581" width="1" height="14.6" fill="#e2e2e2"/>
<text x="664.0" y="592.5" font-size="11" fill="#a8a8a8" text-anchor="middle" font-weight="normal" textLength="22" lengthAdjust="spacingAndGlyphs">Stop</text>
<rect x="679" y="581" width="21" height="14.6" fill="#c8c8c8"/>
<rect x="679" y="581" width="21" height="1" fill="#e2e2e2"/>
<rect x="679" y="581" width="1" height="14.6" fill="#e2e2e2"/>
<text x="689.5" y="592.5" font-size="11" fill="#a8a8a8" text-anchor="middle" font-weight="normal" textLength="17" lengthAdjust="spacingAndGlyphs">BVL</text>
<rect x="701.5" y="581" width="94.5" height="14.6" fill="#cccccc"/>
<text x="748.25" y="592.7" font-size="12" fill="#1a1a1a" text-anchor="middle" font-weight="normal" textLength="90" lengthAdjust="spacingAndGlyphs">2016-07-27 17:37</text>
<rect x="599" y="570" width="201" height="30" fill="#ffffff" opacity="0.16"/>
<text x="696" y="592" font-size="17" font-weight="bold" fill="#7cc87c" opacity="0.35" text-anchor="middle" textLength="162" lengthAdjust="spacingAndGlyphs">www.cntronics.com</text>
</svg></body></html>
